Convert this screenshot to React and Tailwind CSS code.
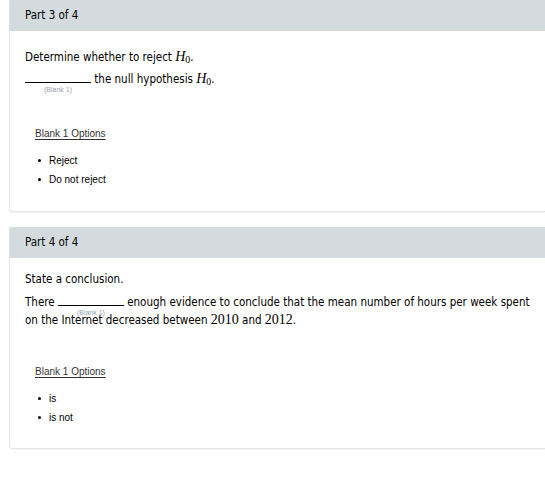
import React from 'react';

const H0 = () => (
  <span className="font-['Liberation_Serif',serif] text-[14px]">
    <i>H</i>
    <sub className="text-[10px] relative top-[2px]">0</sub>
  </span>
);

const Blank = ({ labelClass = 'top-[15px]' }) => (
  <span className="relative inline-block w-[66px] h-[12px] border-b border-black align-baseline">
    <span className={`absolute left-0 right-0 text-center ${labelClass} text-[7px] leading-none text-gray-400 font-['Liberation_Sans',Arial,sans-serif]`}>
      (Blank 1)
    </span>
  </span>
);

const Options = ({ items, className = '' }) => (
  <div className={`pl-[10px] font-['Liberation_Sans',Arial,sans-serif] text-[10px] ${className}`}>
    <div className="text-[#333] underline underline-offset-2">Blank 1 Options</div>
    <ul className="mt-[12px] space-y-[4px]">
      {items.map((it) => (
        <li key={it} className="flex items-center gap-[8px] pl-[3px] text-black">
          <span className="w-[3px] h-[3px] rounded-full bg-black" />
          {it}
        </li>
      ))}
    </ul>
  </div>
);

const Card = ({ title, children, className = '' }) => (
  <div className={`ml-[9px] border-l border-b border-[#dfe4e6] rounded-bl-[4px] shadow-[0_1px_1px_rgba(0,0,0,0.04)] ${className}`}>
    <div className="h-[31px] bg-[#d3dbde] flex items-center px-[15px] text-[11.5px] text-black">
      {title}
    </div>
    {children}
  </div>
);

export default function App() {
  return (
    <div className="w-[545px] h-[496px] bg-white overflow-hidden font-['DejaVu_Sans_Condensed','DejaVu_Sans',Verdana,sans-serif] text-[11.5px] text-black">
      <Card title="Part 3 of 4">
        <div className="pl-[15px] pt-[16px] pb-[24px]">
          <div className="leading-[20px]">
            Determine whether to reject <H0 />.
          </div>
          <div className="leading-[20px] mt-[2px]">
            <Blank /> the null hypothesis <H0 />.
          </div>
          <Options className="mt-[37px]" items={['Reject', 'Do not reject']} />
        </div>
      </Card>
      <Card title="Part 4 of 4" className="mt-[15px]">
        <div className="pl-[15px] pt-[11px] pb-[23px]">
          <div className="leading-[20px]">State a conclusion.</div>
          <div className="leading-[18px] mt-[4px] pr-[14px]">
            There <Blank /> enough evidence to conclude that the mean number of hours per week spent on the Internet decreased between{' '}
            <span className="font-['Liberation_Serif',serif] text-[14px]">2010</span> and{' '}
            <span className="font-['Liberation_Serif',serif] text-[14px]">2012</span>.
          </div>
          <Options className="mt-[35px]" items={['is', 'is not']} />
        </div>
      </Card>
    </div>
  );
}
